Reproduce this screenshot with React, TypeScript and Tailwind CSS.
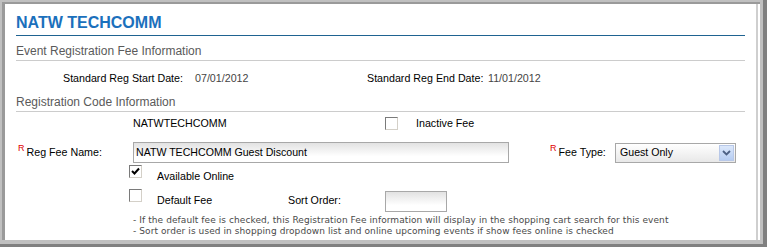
import React from "react";

function CheckBox({ checked = false }: { checked?: boolean }) {
  return (
    <div className="shrink-0 w-[13px] h-[13px] border border-t-[#7a7a7a] border-l-[#7a7a7a] border-r-[#d4d0c8] border-b-[#d4d0c8] bg-white flex items-center justify-center">
      {checked && (
        <svg width="9" height="9" viewBox="0 0 9 9">
          <path d="M1 4 L3.5 6.5 L8 1.5" stroke="#000" strokeWidth="2" fill="none" />
        </svg>
      )}
    </div>
  );
}

function Req() {
  return <span className="text-[9px] text-[#e00000] mr-[2px] -translate-y-[4px] inline-block">R</span>;
}

export default function App() {
  return (
    <div className="w-[767px] h-[247px] bg-[#c0c0c0] border-r-4 border-b-[3px] border-[#808080] pt-[2px] pl-[2px] pr-[3px] pb-[4px] flex whitespace-nowrap font-['Liberation_Sans',Arial,sans-serif]">
      <div className="flex-1 border-t-2 border-l-[3px] border-[#9a9a9a] bg-white pr-[2px] flex">
        <div className="flex-1 border-r-2 border-[#cfcfcf] pl-[11px] pr-[11px]">
          {/* title */}
          <div className="mt-[7px] h-[25px] border-b border-[#1f6391] text-[16px] font-bold leading-[24px] text-[#1b70bc]">
            NATW TECHCOMM
          </div>

          {/* event reg fee info */}
          <div className="mt-[8px] h-[17px] border-b border-[#cccccc] text-[12px] leading-[15px] text-[#5a5a5a]">
            Event Registration Fee Information
          </div>
          <div className="flex h-[22px] mt-[6px] items-center text-[10.7px] text-black">
            <span className="shrink-0 ml-[47px] w-[132px]">Standard Reg Start Date:</span>
            <span className="shrink-0 w-[172px] text-[#444]">07/01/2012</span>
            <span className="shrink-0 w-[121px]">Standard Reg End Date:</span>
            <span className="text-[#444]">11/01/2012</span>
          </div>

          {/* registration code info */}
          <div className="mt-[6px] h-[17px] border-b border-[#cccccc] text-[12px] leading-[15px] text-[#5a5a5a]">
            Registration Code Information
          </div>

          <div className="flex h-[23px] items-center text-[10.7px]">
            <span className="shrink-0 ml-[117px] w-[252px]">NATWTECHCOMM</span>
            <CheckBox />
            <span className="ml-[18px]">Inactive Fee</span>
          </div>

          <div className="flex mt-[7px] h-[21px] items-center text-[10.7px]">
            <span className="shrink-0 w-[117px] pl-[2px] flex items-center">
              <Req />
              Reg Fee Name:
            </span>
            <div className="shrink-0 w-[376px] h-[21px] border border-[#a8a8a8] bg-[linear-gradient(to_bottom,#e2e2e2,#ffffff_70%)] pl-[2px] text-[10.6px] leading-[19px]">
              NATW TECHCOMM Guest Discount
            </div>
            <span className="shrink-0 ml-[41px] w-[65px] flex items-center">
              <Req />
              Fee Type:
            </span>
            <div className="shrink-0 w-[121px] h-[20px] border border-[#a8a8a8] bg-[linear-gradient(to_bottom,#ffffff,#e8e8e8)] flex items-center">
              <span className="flex-1 pl-[4px] text-[10.6px]">Guest Only</span>
              <div className="w-[15px] h-[16px] mr-[1px] bg-[linear-gradient(to_bottom,#dce8fb,#b6cdf2)] border border-[#b8c8e8] flex items-center justify-center">
                <svg width="9" height="6" viewBox="0 0 9 6">
                  <path d="M1 1 L4.5 4.5 L8 1" stroke="#4d6185" strokeWidth="1.8" fill="none" />
                </svg>
              </div>
            </div>
          </div>

          <div className="flex h-[24px] items-start text-[10.7px]">
            <div className="ml-[113px] mt-[2px]">
              <CheckBox checked />
            </div>
            <span className="ml-[15px] mt-[5px]">Available Online</span>
          </div>

          <div className="flex h-[25px] items-start text-[10.7px]">
            <div className="ml-[113px] mt-[2px]">
              <CheckBox />
            </div>
            <span className="shrink-0 ml-[15px] mt-[5px] w-[131px]">Default Fee</span>
            <span className="shrink-0 mt-[5px] w-[97px]">Sort Order:</span>
            <div className="shrink-0 mt-[4px] w-[62px] h-[21px] border border-[#a8a8a8] bg-[linear-gradient(to_bottom,#e2e2e2,#ffffff_70%)]" />
          </div>

          <div className="ml-[117px] mt-[3px] text-[9px] leading-[11px] tracking-[0.08px] text-[#4a4a4a] font-['DejaVu_Sans',Verdana,sans-serif]">
            <div>- If the default fee is checked, this Registration Fee information will display in the shopping cart search for this event</div>
            <div>- Sort order is used in shopping dropdown list and online upcoming events if show fees online is checked</div>
          </div>
        </div>
      </div>
    </div>
  );
}
